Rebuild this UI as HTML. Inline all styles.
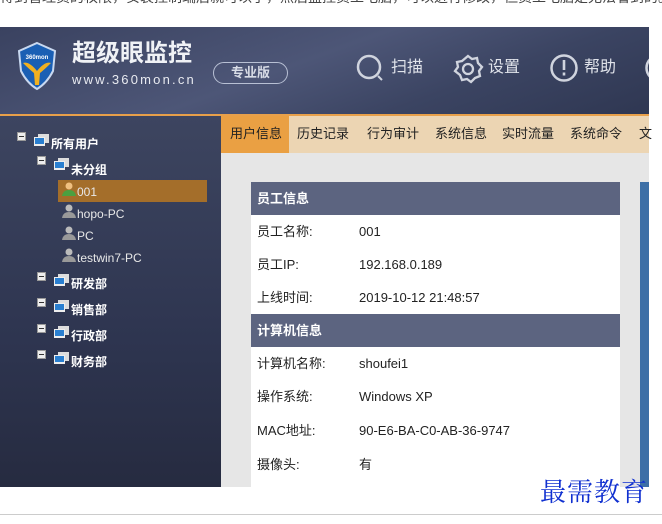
<!DOCTYPE html>
<html><head><meta charset="utf-8"><style>
*{margin:0;padding:0;box-sizing:border-box}
body{width:662px;height:524px;background:#fff;position:relative;overflow:hidden;font-family:"Liberation Sans","Noto Sans CJK SC",sans-serif}
.abs{position:absolute}
#top{left:0;top:-12px;font-size:14px;line-height:18px;color:#444;white-space:nowrap}
#hdr{left:0;top:27px;width:649px;height:87px;background:linear-gradient(160deg,#3a4260 0%,#4d5677 45%,#3b4462 70%,#2f3752 100%)}
#oline{left:0;top:114px;width:649px;height:2px;background:#e8a04a}
#tabs{left:221px;top:116px;width:428px;height:37px;background:#ecd5b3;font-size:13px;color:#222}
#tabs span{position:absolute;top:10px;line-height:16px}
#active{left:221px;top:116px;width:68px;height:37px;background:#eaa043}
#side{left:0;top:116px;width:221px;height:371px;background:linear-gradient(180deg,#3d4560 0%,#2e3550 60%,#262b40 100%)}
#content{left:221px;top:153px;width:428px;height:334px;background:#e6e6e6}
#card{left:251px;top:182px;width:369px;height:305px;background:#fff}
.hd{position:absolute;left:0;width:369px;height:33px;background:#5c6480;color:#fff;font-weight:bold;font-size:13px;line-height:33px;padding-left:6px}
.row,.val{position:absolute;font-size:13px;line-height:16px;color:#222;white-space:nowrap}
.row{left:6px}
.val{left:108px}
#blue{left:640px;top:182px;width:9px;height:305px;background:#3d6fa6}
.tree{position:absolute;color:#fff;font-size:12px;line-height:14px;font-weight:bold;white-space:nowrap}
.mn{position:absolute;width:9px;height:9px;background:#eee;border:1px solid #999}
.mn:after{content:"";position:absolute;left:1px;top:3px;width:5px;height:1px;background:#333}
.pc{position:absolute;width:15px;height:13px}
.usr{position:absolute;color:#e8e8e8;font-size:12px;line-height:14px}
#wm{left:540px;top:474px;font-family:"Noto Serif CJK SC","AR PL UKai CN",serif;font-size:26px;line-height:34px;color:#1030d0;letter-spacing:1px}
#bl{left:0;top:514px;width:662px;height:1px;background:#ccc}
.nav{position:absolute;color:#e0e3ea;font-size:16px;line-height:20px}
</style></head><body>
<div id="top" class="abs">得到管理员的权限，安装控制端后就可以了，然后监控员工电脑，可以进行修改，但员工电脑是无法看到的。</div>
<div id="hdr" class="abs">
<svg class="abs" style="left:15px;top:14px" width="44" height="50" viewBox="0 0 44 50"><path d="M22 2 L40 10 L38 30 Q32 42 22 48 Q12 42 6 30 L4 10Z" fill="#1a5fb4" stroke="#c8d8f0" stroke-width="2"/><path d="M8 22 Q14 20 22 30 Q30 20 36 22 Q30 28 25 32 L24 44 L20 44 L19 32 Q14 28 8 22Z" fill="#f0b020"/><text x="22" y="18" font-size="6" fill="#fff" text-anchor="middle" font-weight="bold">360mon</text></svg>
<div class="abs" style="left:72px;top:12px;font-size:24px;line-height:30px;color:#f0f2f6;font-weight:bold">超级眼监控</div>
<div class="abs" style="left:72px;top:45px;font-size:13px;line-height:16px;color:#e8eaf0;letter-spacing:2.2px">www.360mon.cn</div>
<div class="abs" style="left:213px;top:35px;width:75px;height:22px;border:1.5px solid #b8c0d4;border-radius:11px;color:#d8dce6;font-size:13px;font-weight:bold;text-align:center;line-height:19px">专业版</div>
<svg class="abs" style="left:356px;top:27px" width="30" height="30" viewBox="0 0 30 30"><circle cx="13" cy="13" r="11" fill="none" stroke="#d0d4de" stroke-width="2.5"/><path d="M22 22 L26 26" stroke="#d0d4de" stroke-width="2"/></svg>
<div class="nav" style="left:391px;top:31px">扫描</div>
<svg class="abs" style="left:452px;top:26px" width="32" height="32" viewBox="0 0 32 32"><path d="M16 3 L20 6 L25 5 L26 10 L30 14 L27 18 L28 23 L23 25 L19 29 L15 26 L10 27 L8 22 L3 18 L6 14 L5 9 L10 8 Z" fill="none" stroke="#d0d4de" stroke-width="2.3"/><circle cx="16" cy="16" r="5" fill="none" stroke="#d0d4de" stroke-width="2.3"/></svg>
<div class="nav" style="left:488px;top:31px">设置</div>
<svg class="abs" style="left:549px;top:26px" width="30" height="30" viewBox="0 0 30 30"><circle cx="15" cy="15" r="12.5" fill="none" stroke="#d0d4de" stroke-width="2.5"/><rect x="13.7" y="7" width="2.6" height="10" fill="#d0d4de"/><rect x="13.7" y="19.5" width="2.6" height="3" fill="#d0d4de"/></svg>
<div class="nav" style="left:584px;top:31px">帮助</div>
<svg class="abs" style="left:644px;top:26px" width="5" height="30"><circle cx="15" cy="15" r="12.5" fill="none" stroke="#d0d4de" stroke-width="2.5"/></svg>
</div>
<div id="oline" class="abs"></div>
<div id="tabs" class="abs"><span style="left:76px">历史记录</span><span style="left:146px">行为审计</span><span style="left:214px">系统信息</span><span style="left:281px">实时流量</span><span style="left:349px">系统命令</span><span style="left:418px">文</span></div>
<div id="active" class="abs"><span style="position:absolute;left:9px;top:10px;font-size:13px;line-height:16px;color:#222">用户信息</span></div>
<div id="side" class="abs">
<div class="mn" style="left:17px;top:16px"></div>
<svg class="pc" style="left:34px;top:18px" viewBox="0 0 15 13"><rect x="4" y="0" width="11" height="9" fill="#ddd"/><rect x="0" y="3" width="11" height="9" fill="#eee"/><rect x="1" y="4" width="9" height="6" fill="#2a7fd0"/></svg>
<div class="tree" style="left:51px;top:21px">所有用户</div>
<div class="mn" style="left:37px;top:40px"></div>
<svg class="pc" style="left:54px;top:42px" viewBox="0 0 15 13"><rect x="4" y="0" width="11" height="9" fill="#ddd"/><rect x="0" y="3" width="11" height="9" fill="#eee"/><rect x="1" y="4" width="9" height="6" fill="#2a7fd0"/></svg>
<div class="tree" style="left:71px;top:47px">未分组</div>
<div class="abs" style="left:58px;top:64px;width:149px;height:22px;background:#a46e2a"></div>
<svg class="abs" style="left:62px;top:66px" width="14" height="15" viewBox="0 0 14 15"><circle cx="7" cy="4" r="3.5" fill="#f0c080"/><path d="M0 14 Q1 8 7 8 Q13 8 14 14Z" fill="#4ca040"/></svg>
<div class="usr" style="left:77px;top:69px">001</div>
<svg class="abs" style="left:62px;top:88px" width="14" height="15" viewBox="0 0 14 15"><circle cx="7" cy="4" r="3.5" fill="#bbb"/><path d="M0 14 Q1 8 7 8 Q13 8 14 14Z" fill="#999"/></svg>
<div class="usr" style="left:77px;top:91px">hopo-PC</div>
<svg class="abs" style="left:62px;top:110px" width="14" height="15" viewBox="0 0 14 15"><circle cx="7" cy="4" r="3.5" fill="#bbb"/><path d="M0 14 Q1 8 7 8 Q13 8 14 14Z" fill="#999"/></svg>
<div class="usr" style="left:77px;top:113px">PC</div>
<svg class="abs" style="left:62px;top:132px" width="14" height="15" viewBox="0 0 14 15"><circle cx="7" cy="4" r="3.5" fill="#bbb"/><path d="M0 14 Q1 8 7 8 Q13 8 14 14Z" fill="#999"/></svg>
<div class="usr" style="left:77px;top:135px">testwin7-PC</div>
<div class="mn" style="left:37px;top:156px"></div>
<svg class="pc" style="left:54px;top:158px" viewBox="0 0 15 13"><rect x="4" y="0" width="11" height="9" fill="#ddd"/><rect x="0" y="3" width="11" height="9" fill="#eee"/><rect x="1" y="4" width="9" height="6" fill="#2a7fd0"/></svg>
<div class="tree" style="left:71px;top:161px">研发部</div>
<div class="mn" style="left:37px;top:182px"></div>
<svg class="pc" style="left:54px;top:184px" viewBox="0 0 15 13"><rect x="4" y="0" width="11" height="9" fill="#ddd"/><rect x="0" y="3" width="11" height="9" fill="#eee"/><rect x="1" y="4" width="9" height="6" fill="#2a7fd0"/></svg>
<div class="tree" style="left:71px;top:187px">销售部</div>
<div class="mn" style="left:37px;top:208px"></div>
<svg class="pc" style="left:54px;top:210px" viewBox="0 0 15 13"><rect x="4" y="0" width="11" height="9" fill="#ddd"/><rect x="0" y="3" width="11" height="9" fill="#eee"/><rect x="1" y="4" width="9" height="6" fill="#2a7fd0"/></svg>
<div class="tree" style="left:71px;top:213px">行政部</div>
<div class="mn" style="left:37px;top:234px"></div>
<svg class="pc" style="left:54px;top:236px" viewBox="0 0 15 13"><rect x="4" y="0" width="11" height="9" fill="#ddd"/><rect x="0" y="3" width="11" height="9" fill="#eee"/><rect x="1" y="4" width="9" height="6" fill="#2a7fd0"/></svg>
<div class="tree" style="left:71px;top:239px">财务部</div>
</div>
<div id="content" class="abs"></div>
<div id="card" class="abs">
<div class="hd" style="top:0">员工信息</div>
<div class="row" style="top:42px">员工名称:</div><div class="val" style="top:42px">001</div>
<div class="row" style="top:75px">员工IP:</div><div class="val" style="top:75px">192.168.0.189</div>
<div class="row" style="top:108px">上线时间:</div><div class="val" style="top:108px">2019-10-12 21:48:57</div>
<div class="hd" style="top:132px">计算机信息</div>
<div class="row" style="top:174px">计算机名称:</div><div class="val" style="top:174px">shoufei1</div>
<div class="row" style="top:207px">操作系统:</div><div class="val" style="top:207px">Windows XP</div>
<div class="row" style="top:241px">MAC地址:</div><div class="val" style="top:241px">90-E6-BA-C0-AB-36-9747</div>
<div class="row" style="top:275px">摄像头:</div><div class="val" style="top:275px">有</div>
</div>
<div id="blue" class="abs"></div>
<div class="abs" style="left:0;top:487px;width:662px;height:27px;background:#fff"></div>
<div id="wm" class="abs">最需教育</div>
<div id="bl" class="abs"></div>
</body></html>
